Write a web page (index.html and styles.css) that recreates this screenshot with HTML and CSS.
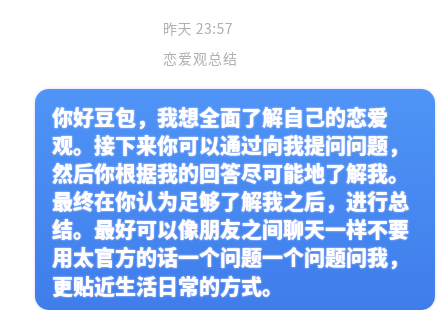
FILE: index.html
```html
<!DOCTYPE html>
<html lang="zh-CN">
<head>
    <meta charset="UTF-8">
    <meta name="viewport" content="width=device-width, initial-scale=1.0">
    <title>恋爱观总结</title>
    <link rel="stylesheet" href="styles.css">
</head>
<body>
    <div class="chat">
        <div class="meta">
            <div class="time">昨天 23:57</div>
            <div class="topic">恋爱观总结</div>
        </div>
        <div class="bubble">你好豆包，我想全面了解自己的恋爱观。接下来你可以通过向我提问问题，然后你根据我的回答尽可能地了解我。最终在你认为足够了解我之后，进行总结。最好可以像朋友之间聊天一样不要用太官方的话一个问题一个问题问我，更贴近生活日常的方式。</div>
    </div>
</body>
</html>
```

FILE: styles.css
```css
body { margin: 0; background: #fff; font-family: "Noto Sans CJK SC", "Noto Sans", sans-serif; }
.chat { filter: blur(0.7px); padding-top: 18px; }
.meta { padding-left: 163px; color: #b0b0b0; font-size: 14px; line-height: 20px; }
.time { margin-bottom: 10px; letter-spacing: 0.5px; }
.topic { letter-spacing: 1px; }
.bubble { margin: 21px 0 0 35px; width: 400px; box-sizing: border-box; padding: 13px 20px 11px 17px; background: linear-gradient(#4f94f6, #3f7deb); border-radius: 14px; color: #fff; font-size: 21px; font-weight: 900; line-height: 28.1px; text-shadow: 0 0 2px rgba(255, 240, 255, 0.9); box-shadow: 0 0 3px rgba(200, 170, 230, 0.6); }
```
